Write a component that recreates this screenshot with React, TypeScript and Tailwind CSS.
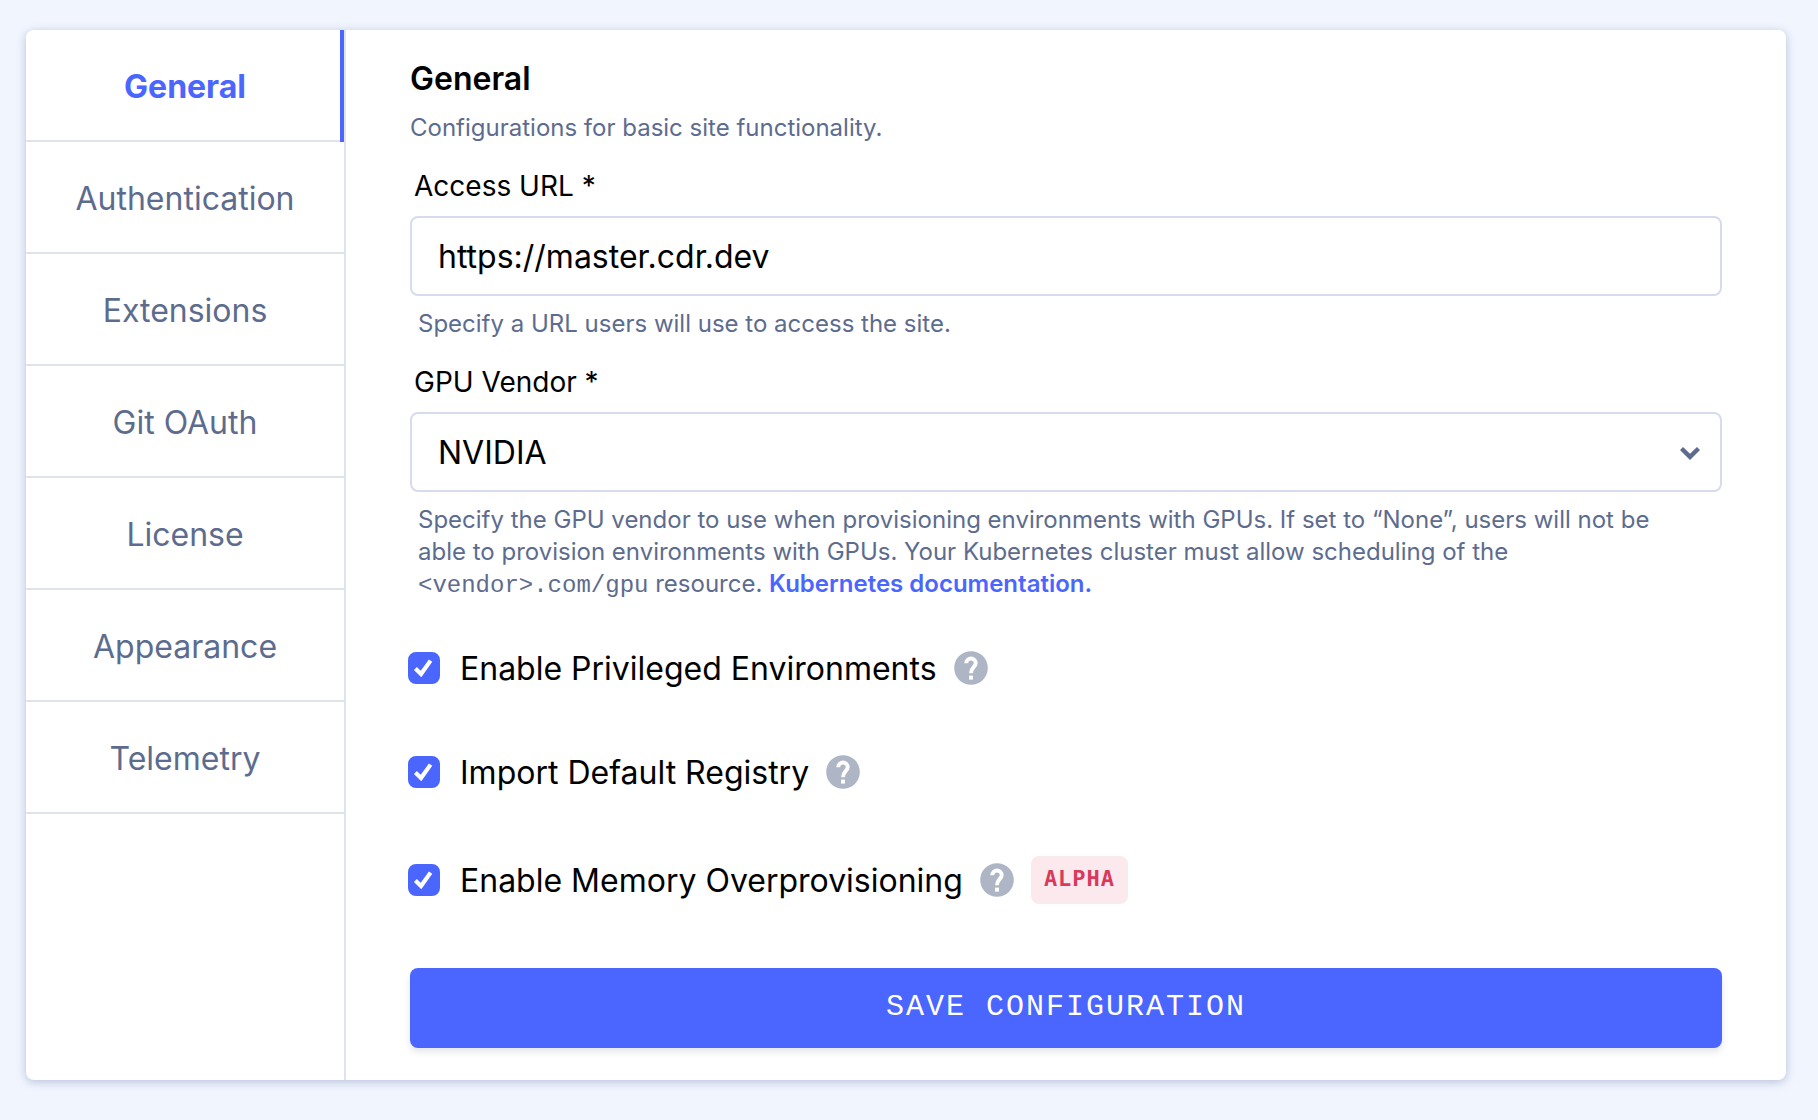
import { useState } from "react";

const tabs = ["General", "Authentication", "Extensions", "Git OAuth", "License", "Appearance", "Telemetry"];

function Chevron() {
  return (
    <svg viewBox="0 0 20 13" className="pointer-events-none absolute top-[35px] right-[22px] h-[13px] w-[20px]" aria-hidden="true">
      <path d="M3 0 L10 6.8 L17 0 L20 3.1 L10 13 L0 3.1 Z" fill="#5d6c8e" />
    </svg>
  );
}

function HelpIcon() {
  return (
    <svg viewBox="0 0 40 40" className="size-10" aria-hidden="true">
      <circle cx="20" cy="20" r="16.8" fill="#aeb5c5" />
      <path d="M15.3 15.2 A4.7 4.7 0 1 1 24.7 15.2 C24.7 18.8 20 19.2 20 25.2" fill="none" stroke="#fff" strokeWidth="3.9" />
      <rect x="18" y="27.6" width="4" height="4" fill="#fff" />
    </svg>
  );
}

type OptionProps = { id: string; label: string; badge?: string };

function Option({ id, label, badge }: OptionProps) {
  const [checked, setChecked] = useState(true);
  return (
    <div className="-ml-0.5 flex items-center">
      <span className="relative mr-5 flex size-8">
        <input
          id={id}
          type="checkbox"
          checked={checked}
          onChange={(e) => setChecked(e.target.checked)}
          className="peer size-8 appearance-none rounded-lg border-2 border-[#d6dceb] checked:border-[#4a66ff] checked:bg-[#4a66ff]"
        />
        <svg viewBox="0 0 32 32" className="pointer-events-none absolute inset-0 hidden size-8 peer-checked:block" aria-hidden="true">
          <path d="M7.4 16.6 L13 22 L22.6 8.6" fill="none" stroke="#fff" strokeWidth="4.2" />
        </svg>
      </span>
      <label htmlFor={id} className="pt-0.5 text-[32px] leading-[38px] text-black">
        {label}
      </label>
      <button type="button" aria-label={`About ${label}`} className="ml-3.5">
        <HelpIcon />
      </button>
      {badge && (
        <span className="ml-3.5 flex h-12 items-center rounded-lg bg-[#fbe9ed] px-[13px] pb-1 font-['DejaVu_Sans_Mono',monospace] text-[22px] font-bold tracking-[1px] text-[#d93a5c]">
          {badge}
        </span>
      )}
    </div>
  );
}

export default function App() {
  const [active, setActive] = useState("General");
  const [url, setUrl] = useState("https://master.cdr.dev");
  const [vendor, setVendor] = useState("NVIDIA");
  return (
    <div className="min-h-screen bg-[#f1f5fe] pt-[30px] pr-8 pb-10 pl-[26px] font-['Inter',sans-serif]">
      <main className="flex overflow-hidden rounded-lg bg-white shadow-[0_2px_10px_rgba(93,117,160,0.4)]">
        <nav className="w-80 shrink-0 border-r-2 border-[#dfe3ec]">
          {tabs.map((tab) => (
            <button
              key={tab}
              type="button"
              onClick={() => setActive(tab)}
              className={
                tab === active
                  ? "relative block h-28 w-full border-b-2 border-[#dfe3ec] pt-1 text-[32px] leading-10 font-bold text-[#4a66ff]"
                  : "relative block h-28 w-full border-b-2 border-[#dfe3ec] pt-1 text-[32px] leading-10 text-[#5d6c8e]"
              }
            >
              {tab}
              {tab === active && <span className="absolute top-0 right-0 -bottom-0.5 w-1 bg-[#4a66ff]" />}
            </button>
          ))}
        </nav>
        <form className="min-w-0 flex-1 px-16 pt-[29px] pb-8" onSubmit={(e) => e.preventDefault()}>
          <h1 className="text-[32px] leading-10 font-semibold text-black">General</h1>
          <p className="mt-[13px] text-2xl text-[#5d6c8e]">Configurations for basic site functionality.</p>

          <label htmlFor="access-url" className="mt-[26px] ml-1 block text-[28px] leading-8 text-black">
            Access URL *
          </label>
          <input
            id="access-url"
            type="text"
            value={url}
            onChange={(e) => setUrl(e.target.value)}
            className="mt-3.5 block h-20 w-full rounded-lg border-2 border-[#d6dceb] px-[26px] text-[32px] text-black"
          />
          <p className="mt-3 ml-2 text-2xl text-[#5d6c8e]">Specify a URL users will use to access the site.</p>

          <label htmlFor="gpu-vendor" className="mt-[26px] ml-1 block text-[28px] leading-8 text-black">
            GPU Vendor *
          </label>
          <div className="relative mt-3.5">
            <select
              id="gpu-vendor"
              value={vendor}
              onChange={(e) => setVendor(e.target.value)}
              className="block h-20 w-full appearance-none rounded-lg border-2 border-[#d6dceb] bg-white px-[26px] pt-0.5 text-[32px] text-black"
            >
              <option>NVIDIA</option>
              <option>AMD</option>
              <option>None</option>
            </select>
            <Chevron />
          </div>
          <p className="mt-3 mr-16 ml-2 text-2xl text-[#5d6c8e]">
            Specify the GPU vendor to use when provisioning environments with GPUs. If set to “None”, users will not be
            able to provision environments with GPUs. Your Kubernetes cluster must allow scheduling of the{" "}
            <code className="font-['Liberation_Mono',monospace] leading-none">&lt;vendor&gt;.com/gpu</code> resource.{" "}
            <a href="#kubernetes" className="font-semibold text-[#4a66ff]">
              Kubernetes documentation.
            </a>
          </p>

          <div className="mt-12 mb-16 flex flex-col gap-16">
            <Option id="privileged" label="Enable Privileged Environments" />
            <Option id="registry" label="Import Default Registry" />
            <Option id="memory" label="Enable Memory Overprovisioning" badge="ALPHA" />
          </div>

          <button
            type="submit"
            className="h-20 w-full rounded-lg bg-[#4a66ff] pb-0.5 font-['Liberation_Mono',monospace] text-[30px] tracking-[2px] text-white uppercase shadow-[0_4px_6px_rgba(40,50,90,0.12)]"
          >
            Save Configuration
          </button>
        </form>
      </main>
    </div>
  );
}
